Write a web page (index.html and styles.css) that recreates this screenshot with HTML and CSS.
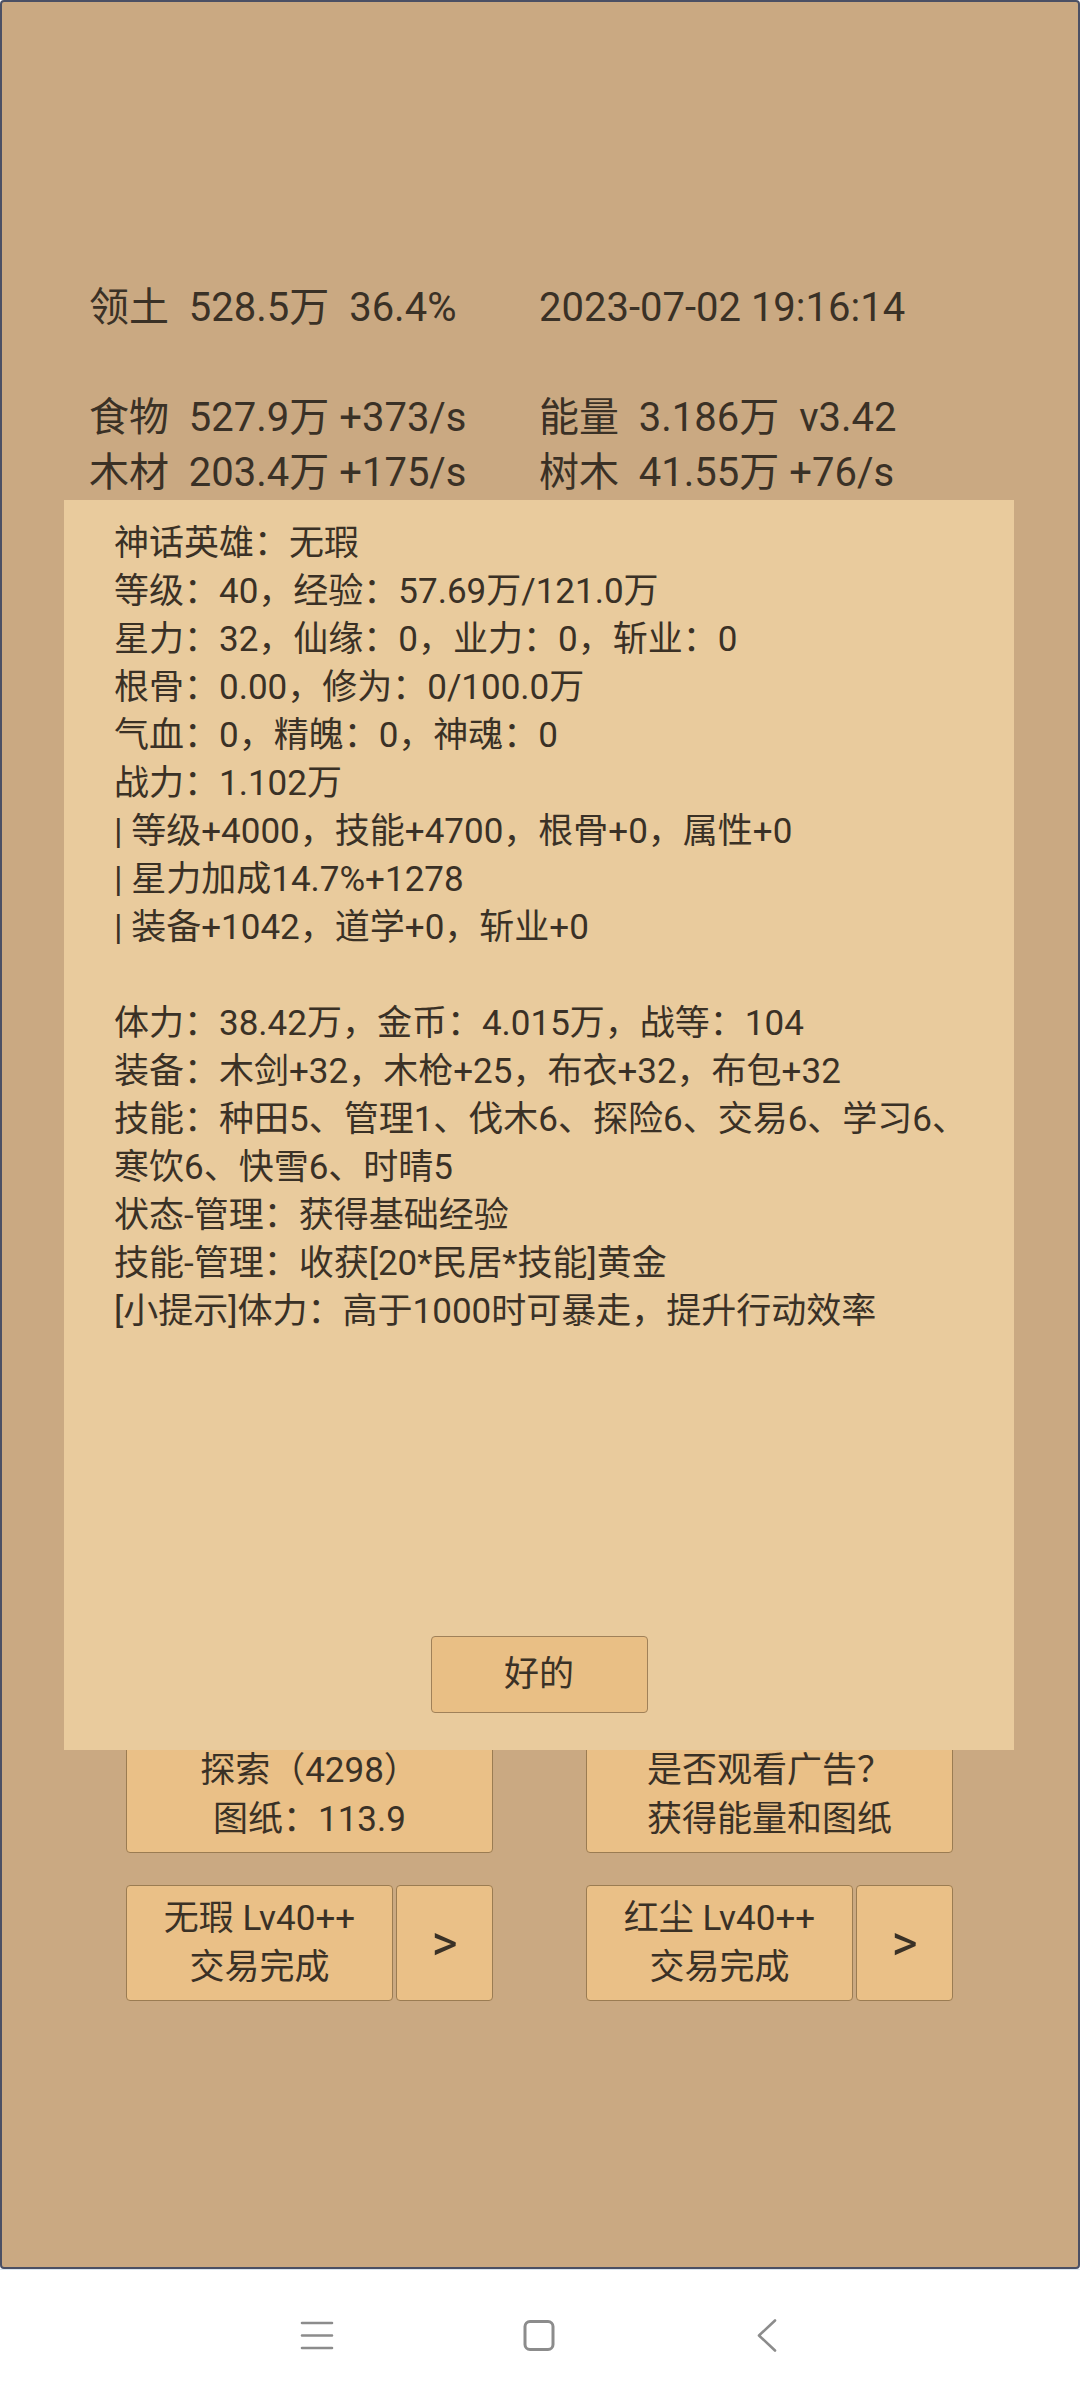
FILE: index.html
```html
<!DOCTYPE html>
<html lang="zh-CN">
<head>
    <meta charset="UTF-8">
    <meta name="viewport" content="width=device-width, initial-scale=1.0">
    <title>领土</title>
    <link rel="stylesheet" href="styles.css">
</head>
<body>
<div class="screen">
    <div class="stats">
        <div>领土  528.5万  36.4%</div>
        <div>2023-07-02 19:16:14</div>
        <div class="blank"></div>
        <div>食物  527.9万 +373/s</div>
        <div>能量  3.186万  v3.42</div>
        <div>木材  203.4万 +175/s</div>
        <div>树木  41.55万 +76/s</div>
    </div>

    <div class="actions">
        <button class="btn">探索（4298）<br>图纸：113.9</button>
        <button class="btn">是否观看广告？<br>获得能量和图纸</button>
        <div class="pair">
            <button class="btn">无瑕 Lv40++<br>交易完成</button>
            <button class="btn arrow">&gt;</button>
        </div>
        <div class="pair">
            <button class="btn">红尘 Lv40++<br>交易完成</button>
            <button class="btn arrow">&gt;</button>
        </div>
    </div>

    <div class="dialog">
        <div class="dialog-text">
            <div>神话英雄：无瑕</div>
            <div>等级：40，经验：57.69万/121.0万</div>
            <div>星力：32，仙缘：0，业力：0，斩业：0</div>
            <div>根骨：0.00，修为：0/100.0万</div>
            <div>气血：0，精魄：0，神魂：0</div>
            <div>战力：1.102万</div>
            <div>| 等级+4000，技能+4700，根骨+0，属性+0</div>
            <div>| 星力加成14.7%+1278</div>
            <div>| 装备+1042，道学+0，斩业+0</div>
            <div class="line-blank"></div>
            <div>体力：38.42万，金币：4.015万，战等：104</div>
            <div>装备：木剑+32，木枪+25，布衣+32，布包+32</div>
            <div>技能：种田5、管理1、伐木6、探险6、交易6、学习6、</div>
            <div>寒饮6、快雪6、时晴5</div>
            <div>状态-管理：获得基础经验</div>
            <div>技能-管理：收获[20*民居*技能]黄金</div>
            <div>[小提示]体力：高于1000时可暴走，提升行动效率</div>
        </div>
        <button class="btn ok-btn">好的</button>
    </div>
</div>

<div class="navbar">
    <svg class="nav-icon nav-menu" width="44" height="44" viewBox="0 0 44 44">
        <path d="M7 10H37M7 22.5H37M7 35H37" stroke="#8c8c8c" stroke-width="2.6" stroke-linecap="round" fill="none"/>
    </svg>
    <svg class="nav-icon nav-home" width="44" height="44" viewBox="0 0 44 44">
        <rect x="8" y="8.5" width="28" height="28" rx="5" stroke="#8c8c8c" stroke-width="3" fill="none"/>
    </svg>
    <svg class="nav-icon nav-back" width="44" height="44" viewBox="0 0 44 44">
        <polyline points="30,7.5 14,22.5 30,37.5" stroke="#8c8c8c" stroke-width="2.6" stroke-linecap="round" stroke-linejoin="round" fill="none"/>
    </svg>
</div>
</body>
</html>
```

FILE: styles.css
```css
* {
    margin: 0;
    padding: 0;
    box-sizing: border-box;
}

body {
    width: 1080px;
    height: 2400px;
    background: #fff;
    color: #3a3126;
    font-family: Roboto, "Noto Sans CJK SC", sans-serif;
}

.screen {
    position: relative;
    height: 2269px;
    background: #caa982;
    border: 2px solid #4b5064;
    border-radius: 4px;
    overflow: hidden;
}

.stats {
    display: grid;
    grid-template-columns: 450px auto;
    padding: 278px 0 0 87px;
    font-size: 40px;
    line-height: 55px;
}

.stats div {
    white-space: pre;
}

.stats .blank {
    grid-column: 1 / 3;
    height: 55px;
}

.actions {
    display: grid;
    grid-template-columns: 367px 367px;
    column-gap: 93px;
    row-gap: 32px;
    margin-top: 1237px;
    padding-left: 124px;
}

.btn {
    height: 116px;
    background: #eac087;
    border: 1.5px solid #9b7c52;
    border-radius: 4px;
    color: #3a3126;
    font-family: Roboto, "Noto Sans CJK SC", sans-serif;
    font-size: 35px;
    line-height: 49px;
}

.pair {
    display: flex;
    gap: 3px;
}

.pair .btn {
    flex: 1;
}

.pair .arrow {
    flex: 0 0 97px;
    font-size: 50px;
    line-height: 1;
}

.dialog {
    position: absolute;
    top: 498px;
    left: 62px;
    width: 950px;
    height: 1250px;
    display: flex;
    flex-direction: column;
    background: #e9cb9d;
    padding: 20px 50px 37px;
}

.dialog-text {
    font-size: 35px;
    line-height: 48px;
}

.dialog-text div {
    white-space: pre;
}

.dialog-text .line-blank {
    height: 48px;
}

.ok-btn {
    margin-top: auto;
    align-self: center;
    width: 217px;
    height: 77px;
    background: #e9bf85;
    border-color: #a08159;
}

.navbar {
    display: flex;
    align-items: center;
    height: 131px;
    border-top: 1px solid #dce6ee;
}

.nav-menu {
    margin-left: 295px;
}

.nav-home {
    margin-left: 178px;
}

.nav-back {
    margin-left: 184px;
}
```
